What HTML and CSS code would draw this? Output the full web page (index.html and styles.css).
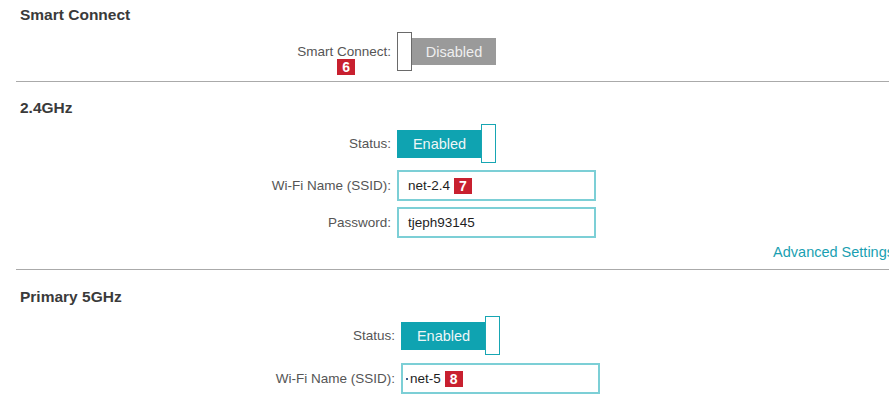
FILE: index.html
```html
<!DOCTYPE html>
<html lang="en">
<head>
<meta charset="utf-8">
<title>Wireless Settings</title>
<link rel="stylesheet" href="styles.css">
</head>
<body>
<div class="page">
  <section class="section section-smart">
    <h2 class="heading">Smart Connect</h2>
    <div class="row">
      <span class="label"><span class="label-text">Smart Connect:<span class="badge badge-float">6</span></span></span>
      <div class="toggle toggle-off"><span class="knob"></span><span class="bar">Disabled</span></div>
    </div>
  </section>

  <section class="section section-24">
    <h2 class="heading">2.4GHz</h2>
    <div class="row row-status">
      <span class="label">Status:</span>
      <div class="toggle toggle-on"><span class="bar">Enabled</span><span class="knob"></span></div>
    </div>
    <div class="row row-field">
      <span class="label">Wi-Fi Name (SSID):</span>
      <div class="field">net-2.4 <span class="badge">7</span></div>
    </div>
    <div class="row row-field-tight">
      <span class="label">Password:</span>
      <div class="field">tjeph93145</div>
    </div>
    <div class="adv"><a class="adv-link">Advanced Settings</a></div>
  </section>

  <section class="section section-5">
    <h2 class="heading">Primary 5GHz</h2>
    <div class="row row-wide row-status-5">
      <span class="label">Status:</span>
      <div class="toggle toggle-on"><span class="bar">Enabled</span><span class="knob"></span></div>
    </div>
    <div class="row row-wide row-field-5">
      <span class="label">Wi-Fi Name (SSID):</span>
      <div class="field field-focus"><span class="caret"></span>net-5 <span class="badge">8</span></div>
    </div>
  </section>
</div>
</body>
</html>
```
FILE: styles.css
```css
html, body {
  margin: 0;
  padding: 0;
  background: #ffffff;
  overflow: hidden;
}

body {
  font-family: "Liberation Sans", Arial, sans-serif;
  color: #333333;
}

.page {
  padding-left: 16px;
}

.section-smart {
  padding-top: 6px;
  padding-bottom: 10px;
  border-bottom: 1px solid #aaaaaa;
}

.section-24 {
  padding-top: 17px;
  padding-bottom: 8px;
  border-bottom: 1px solid #aaaaaa;
}

.section-5 {
  padding-top: 18px;
}

.heading {
  margin: 0;
  padding-left: 4px;
  font-size: 15.5px;
  line-height: 18px;
  font-weight: bold;
  color: #3a3a3a;
}

.row {
  display: grid;
  grid-template-columns: 375px auto;
  column-gap: 6px;
  align-items: center;
  justify-content: start;
  margin-top: 8px;
}

.row-wide {
  grid-template-columns: 379px auto;
}

.row-status {
  margin-top: 7px;
}

.row-field {
  margin-top: 7px;
}

.row-field-tight {
  margin-top: 6px;
}

.row-status-5 {
  margin-top: 10px;
}

.row-field-5 {
  margin-top: 8px;
}

.label {
  text-align: right;
  font-size: 13.5px;
  line-height: 16px;
  color: #555555;
  white-space: nowrap;
}

.label-text {
  position: relative;
}

.toggle {
  display: flex;
  align-items: center;
  height: 39px;
}

.knob {
  box-sizing: border-box;
  width: 15px;
  height: 39px;
  background: #ffffff;
  border: 1px solid #6a6a6a;
}

.bar {
  display: flex;
  align-items: center;
  justify-content: center;
  width: 84px;
  height: 28px;
  font-size: 14.5px;
  color: #eef6f7;
}

.toggle-off .bar {
  background: #9a9a9a;
  height: 27px;
  color: #efefef;
}

.toggle-on .bar {
  background: #0fa3b1;
  width: 85px;
}

.toggle-on .knob {
  margin-left: -1px;
  border: 1.5px solid #17a6b3;
}

.field {
  box-sizing: border-box;
  display: flex;
  align-items: center;
  width: 199px;
  height: 31px;
  padding-left: 9px;
  border: 2px solid #7ccfd6;
  font-size: 13.5px;
  color: #1e1e1e;
  white-space: pre;
}

.field-focus {
  padding-left: 3px;
}

.caret {
  display: inline-block;
  width: 2px;
  height: 2px;
  margin-right: 2px;
  background: #3a5a8a;
}

.badge {
  display: inline-block;
  width: 18px;
  height: 16px;
  line-height: 16px;
  text-align: center;
  background: #c8202f;
  color: #ffffff;
  font-weight: bold;
  font-size: 14px;
}

.badge-float {
  position: absolute;
  left: 40px;
  top: 15px;
}

.adv {
  display: flex;
  justify-content: flex-end;
  margin-top: 5px;
  margin-right: -5px;
}

.adv-link {
  font-size: 14.5px;
  line-height: 18px;
  color: #1a9fb2;
  white-space: nowrap;
  cursor: pointer;
}
```
